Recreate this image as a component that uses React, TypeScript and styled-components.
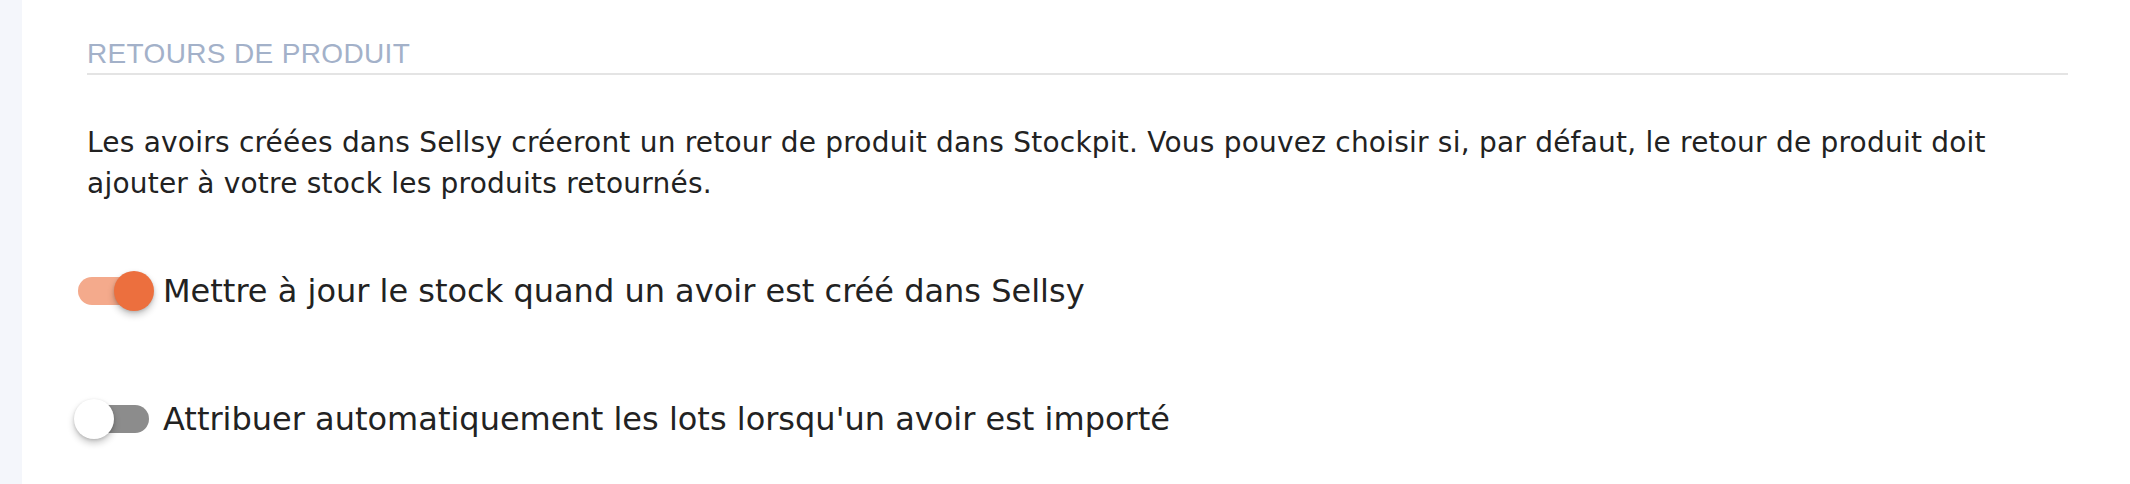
import React, { useState } from "react";
import styled, { createGlobalStyle } from "styled-components";

const GlobalStyle = createGlobalStyle`
  html, body {
    margin: 0;
    padding: 0;
    background: #ffffff;
  }
  #root {
    min-height: 484px;
  }
`;

const Page = styled.div`
  display: flex;
  min-height: 484px;
`;

const SideStrip = styled.div`
  width: 22px;
  flex-shrink: 0;
  background: #f4f6fb;
`;

const Content = styled.main`
  flex: 1;
  display: flex;
  flex-direction: column;
  padding: 38px 62px 0 65px;
`;

const SectionTitle = styled.h2`
  margin: 0;
  padding-bottom: 3px;
  border-bottom: 2px solid #e4e4e4;
  font-family: "Liberation Sans", Arial, sans-serif;
  font-weight: 400;
  font-size: 28px;
  line-height: 32px;
  letter-spacing: 0.35px;
  color: #a3b1c9;
`;

const Description = styled.p`
  margin: 47px 0 0 0;
  font-family: "DejaVu Sans", sans-serif;
  font-size: 28px;
  line-height: 41px;
  letter-spacing: 0.22px;
  color: #222222;
`;

const ToggleList = styled.div`
  display: flex;
  flex-direction: column;
  gap: 88px;
  margin-top: 67px;
`;

const ToggleRow = styled.label`
  display: flex;
  align-items: center;
  gap: 9px;
  cursor: pointer;
`;

const SwitchBox = styled.span`
  position: relative;
  display: inline-block;
  width: 80px;
  height: 40px;
  margin-left: -13px;
  flex-shrink: 0;
`;

const Track = styled.span<{ $on: boolean }>`
  position: absolute;
  left: 4px;
  right: 5px;
  top: 6px;
  height: 28px;
  border-radius: 14px;
  background: ${p => (p.$on ? "#f4aa8c" : "#8c8c8c")};
`;

const Knob = styled.span<{ $on: boolean }>`
  position: absolute;
  top: 0;
  left: ${p => (p.$on ? "40px" : "0")};
  width: 40px;
  height: 40px;
  border-radius: 50%;
  background: ${p => (p.$on ? "#ec6f3e" : "#ffffff")};
  box-shadow: 0 4px 7px rgba(0, 0, 0, 0.22), 0 1px 3px rgba(0, 0, 0, 0.14);
  transition: left 0.15s;
`;

const ToggleLabel = styled.span`
  font-family: "DejaVu Sans", sans-serif;
  font-size: 32px;
  line-height: 40px;
  color: #222222;
`;

interface IToggleProps {
  label: string;
  defaultOn?: boolean;
}

const Toggle: React.FC<IToggleProps> = ({ label, defaultOn = false }) => {
  const [on, setOn] = useState(defaultOn);
  return (
    <ToggleRow onClick={() => setOn(!on)}>
      <SwitchBox>
        <Track $on={on} />
        <Knob $on={on} />
      </SwitchBox>
      <ToggleLabel>{label}</ToggleLabel>
    </ToggleRow>
  );
};

export default function App() {
  return (
    <>
      <GlobalStyle />
      <Page>
        <SideStrip />
        <Content>
          <SectionTitle>RETOURS DE PRODUIT</SectionTitle>
          <Description>
            Les avoirs créées dans Sellsy créeront un retour de produit dans Stockpit. Vous pouvez choisir si, par
            défaut, le retour de produit doit ajouter à votre stock les produits retournés.
          </Description>
          <ToggleList>
            <Toggle label="Mettre à jour le stock quand un avoir est créé dans Sellsy" defaultOn />
            <Toggle label="Attribuer automatiquement les lots lorsqu'un avoir est importé" />
          </ToggleList>
        </Content>
      </Page>
    </>
  );
}
